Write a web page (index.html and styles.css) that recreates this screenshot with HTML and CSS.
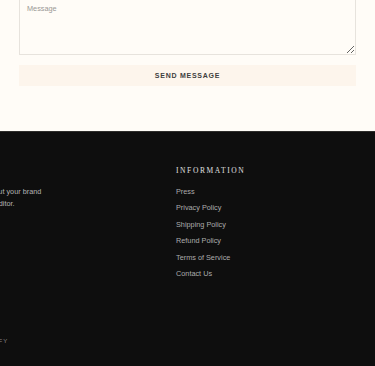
FILE: index.html
```html
<!DOCTYPE html>
<html lang="en">
<head>
  <meta charset="UTF-8">
  <meta name="viewport" content="width=device-width, initial-scale=1.0">
  <title>Contact</title>
  <link rel="stylesheet" href="styles.css">
</head>
<body>
  <section class="contact">
    <form class="contact-form">
      <textarea class="field" placeholder="Message"></textarea>
      <button type="button" class="send">Send message</button>
    </form>
  </section>

  <footer class="footer">
    <div class="footer-inner">
      <div class="footer-cols">
        <div class="col col-about">
          <h3 class="col-title">About</h3>
          <p class="about-text">Use this text area to tell your customers about your brand<br>and vision. You can change it in the theme editor.</p>
        </div>
        <div class="col">
          <h3 class="col-title">Information</h3>
          <ul class="links">
            <li><a href="#">Press</a></li>
            <li><a href="#">Privacy Policy</a></li>
            <li><a href="#">Shipping Policy</a></li>
            <li><a href="#">Refund Policy</a></li>
            <li><a href="#">Terms of Service</a></li>
            <li><a href="#">Contact Us</a></li>
          </ul>
        </div>
      </div>
      <div class="footer-bottom">© 2024, Store. Powered by Shopify</div>
    </div>
  </footer>
</body>
</html>
```

FILE: styles.css
```css
body {
  margin: 0;
  padding: 0;
  background-color: #fffcf7;
  font-family: 'Liberation Sans', Arial, sans-serif;
  overflow: hidden;
}
.contact {
  padding: 0 19px 45px;
}
.contact-form {
  display: flex;
  flex-direction: column;
  margin-top: -17px;
}
.field {
  box-sizing: border-box;
  width: 100%;
  height: 72px;
  padding: 20px 7px;
  border: 1px solid #e7e3dd;
  background-color: #fffcf7;
  font-family: 'Liberation Sans', Arial, sans-serif;
  font-size: 7.3px;
  line-height: 10px;
  color: #333;
  resize: vertical;
}
.field::placeholder {
  color: #9a9895;
}
.send {
  margin-top: 10px;
  height: 21px;
  border: none;
  background-color: #fdf5ec;
  color: #3e3e3e;
  font-family: 'Liberation Sans', Arial, sans-serif;
  font-size: 7px;
  font-weight: bold;
  letter-spacing: 0.75px;
  text-transform: uppercase;
  cursor: pointer;
}
.footer {
  background-color: #0e0e0e;
  border-top: 1px solid #2e2d2b;
  height: 240px;
  overflow: hidden;
}
.footer-inner {
  margin-left: -152px;
  padding-top: 33px;
}
.footer-cols {
  display: grid;
  grid-template-columns: 328px 1fr;
}
.col-about {
  padding-left: 8px;
}
.col-title {
  margin: 0;
  font-family: 'Liberation Serif', 'Times New Roman', serif;
  font-weight: normal;
  font-size: 7.5px;
  line-height: 12px;
  letter-spacing: 1.6px;
  text-transform: uppercase;
  color: #e0e0e0;
}
.about-text {
  margin: 9px 0 0;
  white-space: nowrap;
  font-size: 7.3px;
  line-height: 11.5px;
  color: #b4b4b4;
}
.links {
  list-style: none;
  margin: 7px 0 0;
  padding: 0;
}
.links li {
  font-size: 7.3px;
  line-height: 16.4px;
}
.links a {
  color: #acacac;
  text-decoration: none;
}
.footer-bottom {
  margin-top: 55px;
  padding-left: 12px;
  white-space: nowrap;
  font-size: 6px;
  line-height: 8px;
  letter-spacing: 1px;
  text-transform: uppercase;
  color: #8c8c8c;
}
```
